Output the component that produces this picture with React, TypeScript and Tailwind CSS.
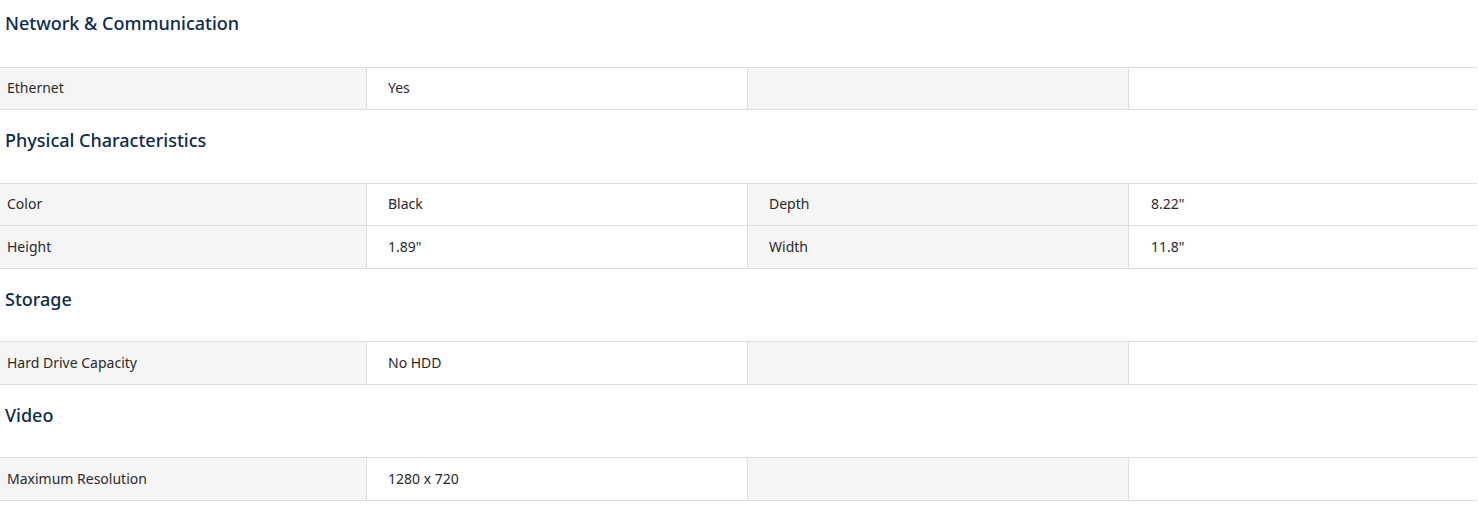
import React from "react";

type Row = [string, string, string, string];
const sections: { title: string; rows: Row[]; heights: string[] }[] = [
  { title: "Network & Communication", rows: [["Ethernet", "Yes", "", ""]], heights: ["h-[42px]"] },
  {
    title: "Physical Characteristics",
    rows: [
      ["Color", "Black", "Depth", "8.22\""],
      ["Height", "1.89\"", "Width", "11.8\""],
    ],
    heights: ["h-[42px]", "h-[43px]"],
  },
  { title: "Storage", rows: [["Hard Drive Capacity", "No HDD", "", ""]], heights: ["h-[43px]"] },
  { title: "Video", rows: [["Maximum Resolution", "1280 x 720", "", ""]], heights: ["h-[43px]"] },
];

export default function App() {
  return (
    <div
      className="w-[1478px] bg-white text-[#2a2a2a]"
      style={{ fontFamily: '"Noto Sans", "Open Sans", sans-serif' }}
    >
      {sections.map((s, i) => (
        <div key={s.title}>
          <div className={`${i === 0 ? "pt-[9px] h-[67px]" : i === 1 ? "pt-[16px] h-[73px]" : "pt-[16px] h-[72px]"} pl-[5px]`}>
            <h2 className="text-[18px] leading-[28px] text-[#0d2b52] font-medium">{s.title}</h2>
          </div>
          <div className="w-[1477px] border-t border-[#dddddd]">
            {s.rows.map((r, j) => (
              <div
                key={j}
                className={`grid grid-cols-[367px_381px_381px_1fr] ${s.heights[j]} border-b border-[#dddddd] text-[14px]`}
              >
                <div className="bg-[#f5f5f5] border-r border-[#dddddd] flex items-center pl-[7px] pb-[2px]">{r[0]}</div>
                <div className="border-r border-[#dddddd] flex items-center pl-[21px] pb-[2px]">{r[1]}</div>
                <div className="bg-[#f5f5f5] border-r border-[#dddddd] flex items-center pl-[21px] pb-[2px]">{r[2]}</div>
                <div className="flex items-center pl-[22px] pb-[2px]">{r[3]}</div>
              </div>
            ))}
          </div>
        </div>
      ))}
    </div>
  );
}
